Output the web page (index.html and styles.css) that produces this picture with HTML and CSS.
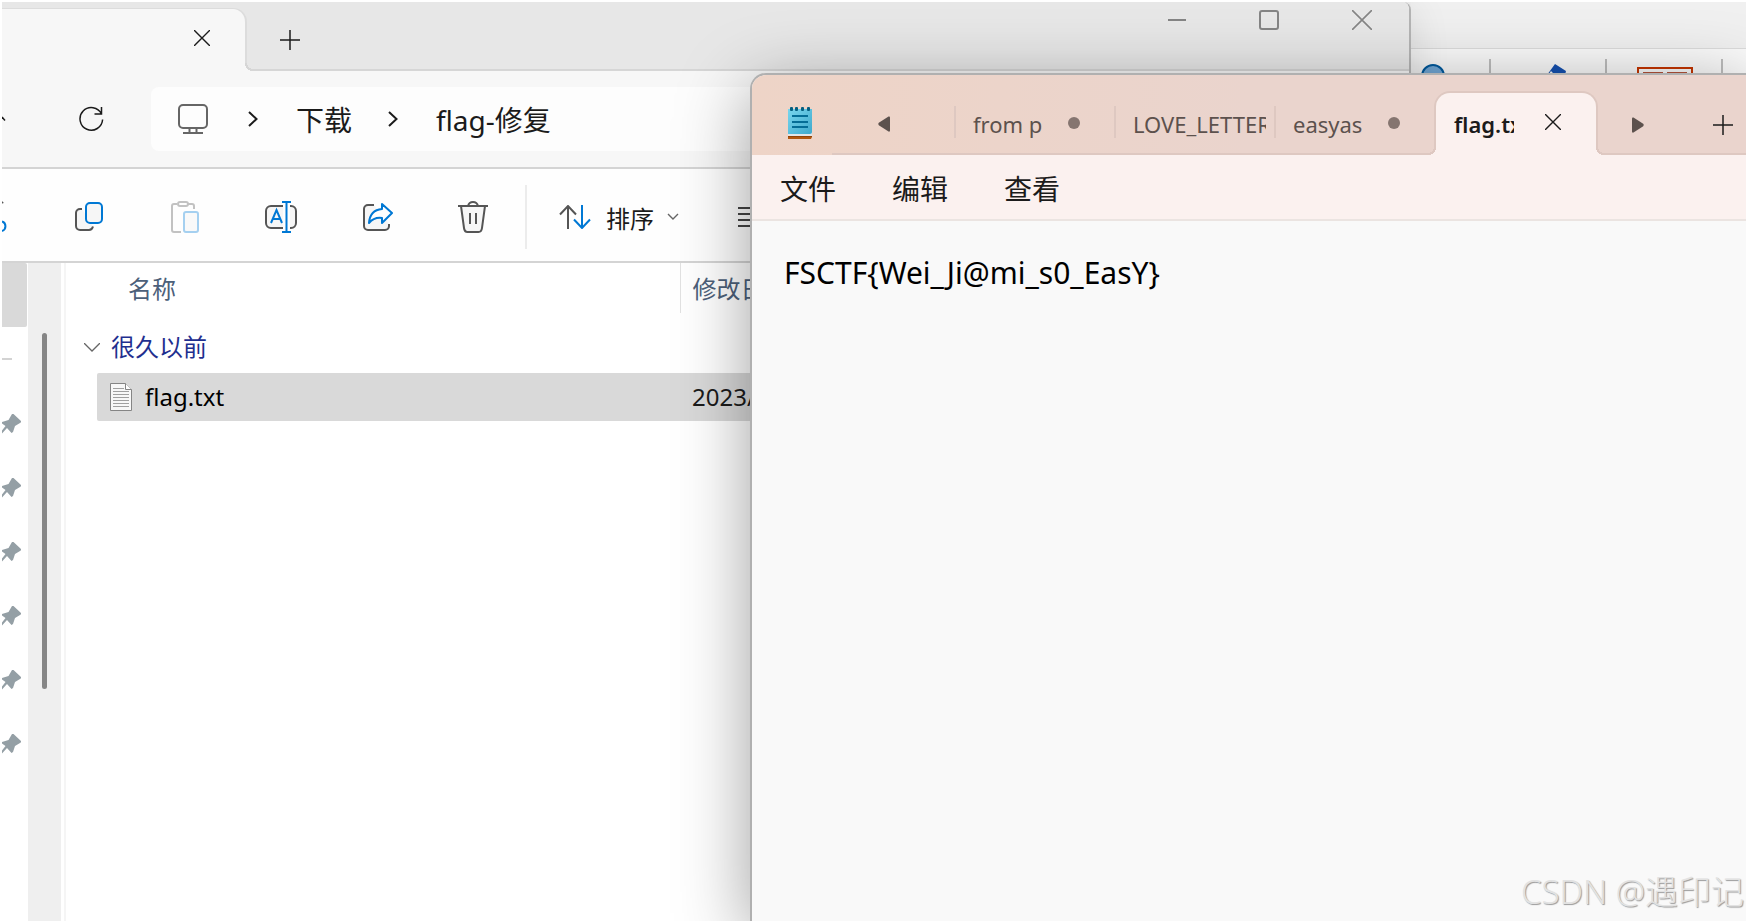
FILE: index.html
```html
<!DOCTYPE html>
<html lang="zh-CN">
<head>
<meta charset="utf-8">
<title>flag.txt</title>
<link rel="stylesheet" href="styles.css">
</head>
<body>
<main class="desktop">

  <section class="office" aria-label="ribbon">
    <div class="office-title"></div>
    <div class="office-ribbon">
      <svg class="office-icons" width="330" height="40" viewBox="0 0 330 40" fill="none">
        <circle cx="22" cy="27" r="11" fill="#73a9d8" stroke="#005a9e" stroke-width="2"/>
        <path d="M79 10v30M195 10v30M311 10v30" stroke="#bdbdbd" stroke-width="2"/>
        <path d="M136 26l8-11 11 7-2 8-8-3-5-5-4 6z" fill="#1651b0"/>
        <path d="M227 40V19h54v21" stroke="#c43501" stroke-width="2"/>
        <path d="M232 24h20M256 24h20" stroke="#b35339" stroke-width="2"/>
      </svg>
    </div>
  </section>

  <section class="explorer" aria-label="explorer">
    <header class="ex-tabs">
      <div class="ex-tab">
        <button class="plain" aria-label="close tab"><svg width="16" height="16" viewBox="0 0 16 16" fill="none" stroke="#1b1b1b" stroke-width="1.4"><path d="M0 0l16 16M16 0L0 16"/></svg></button>
      </div>
      <button class="plain ex-new" aria-label="new tab"><svg width="20" height="20" viewBox="0 0 20 20" fill="none" stroke="#1b1b1b" stroke-width="1.5"><path d="M10 0v20M0 10h20"/></svg></button>
      <div class="ex-controls">
        <button class="plain" aria-label="minimize"><svg width="20" height="20" viewBox="0 0 20 20" fill="none" stroke="#858585" stroke-width="2"><path d="M2 10h18"/></svg></button>
        <button class="plain" aria-label="maximize"><svg width="20" height="20" viewBox="0 0 20 20" fill="none" stroke="#858585" stroke-width="2"><rect x="1" y="1" width="18" height="18" rx="2"/></svg></button>
        <button class="plain" aria-label="close"><svg width="20" height="20" viewBox="0 0 20 20" fill="none" stroke="#858585" stroke-width="1.6"><path d="M0 0l20 20M20 0L0 20"/></svg></button>
      </div>
    </header>

    <nav class="ex-nav">
      <button class="plain ex-up" aria-label="up"><svg width="4" height="6" viewBox="0 0 4 6" fill="none" stroke="#1b1b1b" stroke-width="1.5"><path d="M0 1l3 3.500"/></svg></button>
      <button class="plain ex-refresh" aria-label="refresh"><svg width="26" height="26" viewBox="0 0 26 26" fill="none" stroke="#1b1b1b" stroke-width="1.500"><path d="M23.500 8A11.300 11.300 0 1 0 24.600 13.500M23.500 1v7h-7"/></svg></button>
      <div class="ex-address">
        <svg width="30" height="30" viewBox="0 0 30 30" fill="none" stroke="#666" stroke-width="2"><rect x="1" y="1" width="28" height="23" rx="4"/><path d="M11.500 24v4M18.500 24v4M5 29h20"/></svg>
        <svg class="crumb" width="10" height="16" viewBox="0 0 10 16" fill="none" stroke="#1b1b1b" stroke-width="2"><path d="M1 1l7.500 7L1 15"/></svg>
        <a class="crumb-link" href="#">下载</a>
        <svg class="crumb" width="10" height="16" viewBox="0 0 10 16" fill="none" stroke="#1b1b1b" stroke-width="2"><path d="M1 1l7.500 7L1 15"/></svg>
        <a class="crumb-link" href="#">flag-修复</a>
      </div>
    </nav>

    <div class="ex-toolbar">
      <button class="plain tool-cut" aria-label="cut"><svg width="6" height="32" viewBox="0 0 6 32" fill="none" stroke-width="2"><path d="M0 2l1-1" stroke="#555"/><path d="M0 20.500a5 5 0 0 1 0 9.500" stroke="#0078d4"/></svg></button>
      <button class="plain tool" aria-label="copy"><svg width="32" height="32" viewBox="0 0 32 32" fill="none" stroke-width="2"><path d="M9 8H7a4 4 0 0 0-4 4v13a4 4 0 0 0 4 4h9q3 0 4-3.500" fill="#f6f6f6" stroke="#555"/><rect x="13" y="2" width="16" height="20" rx="4" fill="#f6f6f6" stroke="#0078d4"/></svg></button>
      <button class="plain tool" aria-label="paste"><svg width="32" height="32" viewBox="0 0 32 32" fill="none" stroke-width="2"><path d="M8 3H5a2 2 0 0 0-2 2v24a2 2 0 0 0 2 2h7M19 3h4q2 0 2 2v3" stroke="#c2c2c2"/><rect x="9" y="1" width="10" height="4" rx="2" stroke="#c2c2c2"/><rect x="15" y="11" width="14" height="20" rx="2" fill="#f9f9f9" stroke="#a5d0f0"/></svg></button>
      <button class="plain tool" aria-label="rename"><svg width="32" height="32" viewBox="0 0 32 32" fill="none" stroke-width="2"><path d="M18 5H6a5 5 0 0 0-5 5v12a5 5 0 0 0 5 5h12M25 5h1a5 5 0 0 1 5 5v12a5 5 0 0 1-5 5h-1" fill="#f6f6f6" stroke="#555"/><path d="M6 22l5.500-13L17 22M8 18h7M17 1h9M17 31h9M21.500 1v30" stroke="#0078d4"/></svg></button>
      <button class="plain tool" aria-label="share"><svg width="32" height="32" viewBox="0 0 32 32" fill="none" stroke-width="2"><path d="M13 4H7a4 4 0 0 0-4 4v17a4 4 0 0 0 4 4h17a4 4 0 0 0 4-4v-2" fill="#f6f6f6" stroke="#555"/><path d="M21 3l10 9-10 10v-5q-8-1-13 5Q9 9 21 8z" fill="#fff" stroke="#0078d4" stroke-linejoin="round"/></svg></button>
      <button class="plain tool" aria-label="delete"><svg width="32" height="32" viewBox="0 0 32 32" fill="none" stroke="#555" stroke-width="2"><path d="M4 5l3 22q.5 4 3.500 4h11q3 0 3.500-4l3-22" fill="#f6f6f6"/><path d="M1 5h30M11 5q1-4 5-4t5 4M13 12v11M19 12v11"/></svg></button>
      <span class="tool-sep"></span>
      <button class="plain tool-sort"><svg width="32" height="24" viewBox="0 0 32 24" fill="none" stroke-width="2"><path d="M9 24V1M1 9.500L9 1l8 8.500" stroke="#555"/><path d="M23 0v23M15 14.500l8 8.500 8-8.500" stroke="#0078d4"/></svg><span>排序</span><svg width="12" height="8" viewBox="0 0 12 8" fill="none" stroke="#666" stroke-width="1.400"><path d="M1 1l5 5 5-5"/></svg></button>
      <button class="plain tool-view" aria-label="view"><svg width="24" height="20" viewBox="0 0 24 20" fill="none" stroke="#444" stroke-width="2"><path d="M0 1h24M0 7h24M0 13h24M0 19h24"/></svg></button>
    </div>

    <div class="ex-body">
      <aside class="ex-side">
        <div class="side-current"></div>
        <div class="side-line"></div>
        <ul class="pins">
          <li><svg class="pin" viewBox="0 0 20 22"><path d="M10 1l1.500 0 7.500 7q.5 1.500-1 2l-5 3-2 6-1.500 1-4.500-5-5 5.500v-3l3.500-4.500L0 10.500V9l6.500-2z"/></svg></li>
          <li><svg class="pin" viewBox="0 0 20 22"><path d="M10 1l1.500 0 7.500 7q.5 1.500-1 2l-5 3-2 6-1.500 1-4.500-5-5 5.500v-3l3.500-4.500L0 10.500V9l6.500-2z"/></svg></li>
          <li><svg class="pin" viewBox="0 0 20 22"><path d="M10 1l1.500 0 7.500 7q.5 1.500-1 2l-5 3-2 6-1.500 1-4.500-5-5 5.500v-3l3.500-4.500L0 10.500V9l6.500-2z"/></svg></li>
          <li><svg class="pin" viewBox="0 0 20 22"><path d="M10 1l1.500 0 7.500 7q.5 1.500-1 2l-5 3-2 6-1.500 1-4.500-5-5 5.500v-3l3.500-4.500L0 10.500V9l6.500-2z"/></svg></li>
          <li><svg class="pin" viewBox="0 0 20 22"><path d="M10 1l1.500 0 7.500 7q.5 1.500-1 2l-5 3-2 6-1.500 1-4.500-5-5 5.500v-3l3.500-4.500L0 10.500V9l6.500-2z"/></svg></li>
          <li><svg class="pin" viewBox="0 0 20 22"><path d="M10 1l1.500 0 7.500 7q.5 1.500-1 2l-5 3-2 6-1.500 1-4.500-5-5 5.500v-3l3.500-4.500L0 10.500V9l6.500-2z"/></svg></li>
        </ul>
      </aside>
      <div class="ex-scroll"><div class="ex-thumb"></div></div>
      <div class="ex-files">
        <table class="files">
          <colgroup><col class="col-gutter"><col class="col-name"><col></colgroup>
          <thead>
            <tr><td></td><th scope="col" class="h-name">名称</th><th scope="col" class="h-date">修改日期</th></tr>
          </thead>
          <tbody>
            <tr class="group"><th colspan="3" scope="rowgroup"><span class="group-in"><svg width="16" height="9" viewBox="0 0 16 9" fill="none" stroke="#666" stroke-width="1.300"><path d="M0 0l8 8 8-8"/></svg>很久以前</span></th></tr>
            <tr class="file"><td></td>
              <td class="f-name"><span class="file-in"><svg width="22" height="28" viewBox="0 0 22 28"><path d="M.5.5h15l6 6v21H.5z" fill="#f8f8f8" stroke="#858585"/><path d="M15.500.5v6h6" fill="#fff" stroke="#858585"/><path d="M3 5.500h11M3 8.500h16M3 11.500h16M3 14.500h16M3 17.500h16M3 20.500h16M3 23.500h16" stroke="#a0a0a0"/></svg>flag.txt</span></td>
              <td class="f-date">2023/</td></tr>
          </tbody>
        </table>
      </div>
    </div>
  </section>

  <section class="notepad" aria-label="notepad">
    <header class="np-tabs">
      <div class="np-logo">
        <svg width="24" height="32" viewBox="0 0 24 32"><defs><linearGradient id="pad" x1="0" y1="0" x2="1" y2="1"><stop offset="0" stop-color="#78d6ee"/><stop offset="1" stop-color="#3fa9cc"/></linearGradient></defs><path d="M0 27h24v3l-1 2H0z" fill="#b3570f"/><path d="M0 26h24v3H0z" fill="#e4e6e8"/><path d="M0 29h24v1H0z" fill="#934307"/><path d="M0 2h24v23q0 2-2 2H0z" fill="url(#pad)"/><path d="M4 9h16M4 15h16M4 20h16" stroke="#046d96" stroke-width="2"/><g fill="#045f80"><rect x="2" y="0" width="3" height="4" rx="1"/><rect x="7" y="0" width="3" height="4" rx="1"/><rect x="13" y="0" width="3" height="4" rx="1"/><rect x="19" y="0" width="3" height="4" rx="1"/></g></svg>
      </div>
      <div class="np-strip">
        <button class="plain np-prev" aria-label="previous tabs"><svg width="12" height="16" viewBox="0 0 12 16"><path d="M12 1.500v13q0 1.500-1.500 1L.8 9.200Q-.2 8 .8 6.800L10.500.5Q12 0 12 1.500z" fill="#5c514d"/></svg></button>
        <button class="plain np-tab"><span class="np-label short">from p</span><i class="dot"></i></button>
        <button class="plain np-tab"><span class="np-label long">LOVE_LETTER</span></button>
        <button class="plain np-tab"><span class="np-label short">easyas</span><i class="dot"></i></button>
      </div>
      <div class="np-active">
        <span class="np-label active">flag.txt</span>
        <button class="plain" aria-label="close tab"><svg width="16" height="16" viewBox="0 0 16 16" fill="none" stroke="#1b1b1b" stroke-width="1.400"><path d="M0 0l16 16M16 0L0 16"/></svg></button>
      </div>
      <div class="np-rest">
        <button class="plain" aria-label="next tabs"><svg width="12" height="16" viewBox="0 0 12 16"><path d="M0 1.500v13q0 1.500 1.500 1l9.700-6.300q1-1.200 0-2.400L1.500.5Q0 0 0 1.500z" fill="#5c514d"/></svg></button>
        <button class="plain" aria-label="new tab"><svg width="20" height="20" viewBox="0 0 20 20" fill="none" stroke="#1b1b1b" stroke-width="1.500"><path d="M10 0v20M0 10h20"/></svg></button>
      </div>
    </header>
    <nav class="np-menu">
      <button class="plain">文件</button>
      <button class="plain">编辑</button>
      <button class="plain">查看</button>
    </nav>
    <textarea class="np-text" aria-label="text" spellcheck="false">FSCTF{Wei_Ji@mi_s0_EasY}</textarea>
  </section>

  <div class="watermark">CSDN @遇印记</div>
</main>
</body>
</html>
```

FILE: styles.css
```css
* { box-sizing: border-box; }

body {
  margin: 0;
  padding: 2px;
  height: 100vh;
  background: #fff;
  color: #1b1b1b;
  font-family: "Noto Sans", "Noto Sans CJK SC", sans-serif;
}

svg { display: block; flex: none; }

.plain {
  display: flex;
  align-items: center;
  justify-content: center;
  padding: 0;
  border: 0;
  background: none;
  color: inherit;
  font: inherit;
}

.desktop {
  position: relative;
  height: 100%;
  overflow: hidden;
  background: #eee;
}

/* Window at the back */
.office { height: 100%; display: flex; flex-direction: column; padding-left: 1409px; }
.office-title { height: 47px; background: #f0f0f0; border-bottom: 1px solid #dcdcdc; }
.office-ribbon { flex: 1; background: #fafafa; }

/* File explorer */
.explorer {
  position: absolute;
  inset: 0 335px 0 0;
  display: flex;
  flex-direction: column;
  border-right: 2px solid #b4b4b4;
  border-top-right-radius: 8px;
  background: #fff;
  box-shadow: 0 8px 40px rgba(0, 0, 0, 0.12);
  overflow: hidden;
}

.ex-tabs {
  display: flex;
  height: 69px;
  background: linear-gradient(#d6d6d6, #d6d6d6) bottom / 100% 2px no-repeat #e7e7e7;
}
.ex-tab {
  position: relative;
  display: flex;
  align-items: center;
  justify-content: flex-end;
  width: 245px;
  margin-top: 6px;
  padding: 0 35px 4px 0;
  border: solid #dcdcdc;
  border-width: 1px 2px 0 0;
  border-top-right-radius: 14px;
  background: #f7f7f7;
}
.ex-tab::after {
  content: "";
  position: absolute;
  left: 100%;
  bottom: 0;
  width: 8px;
  height: 8px;
  background: radial-gradient(circle at 100% 0, #e7e7e7 6px, #d6d6d6 6px 8px, #f7f7f7 8px);
}
.ex-new { width: 86px; padding-top: 7px; }
.ex-controls { display: flex; align-items: flex-start; gap: 73px; margin-left: auto; padding: 8px 37px 0 0; }

.ex-nav {
  display: flex;
  align-items: center;
  height: 98px;
  border-bottom: 2px solid #d4d4d4;
  background: #f7f7f7;
}
.ex-up { width: 4px; }
.ex-refresh { width: 26px; margin: 0 47px 0 72px; }
.ex-address {
  flex: 1;
  display: flex;
  align-items: center;
  height: 64px;
  padding-left: 27px;
  border-radius: 8px;
  background: #fdfdfd;
  font-size: 28px;
}
.crumb { margin-left: 40px; }
.crumb-link { margin-left: 38px; color: inherit; text-decoration: none; }
.crumb-link + .crumb { margin-left: 36px; }

.ex-toolbar {
  display: flex;
  align-items: center;
  height: 94px;
  padding-top: 4px;
  border-bottom: 2px solid #d4d4d4;
  background: #fefefe;
}
.tool-cut { width: 39px; justify-content: flex-start; }
.tool { width: 96px; height: 64px; }
.tool-sep { width: 2px; height: 64px; margin-left: 4px; background: #ececec; }
.tool-sort { margin-left: 32px; font-size: 24px; }
.tool-sort span { margin: 0 13px 0 15px; }
.tool-view { margin-left: 59px; }

.ex-body { flex: 1; display: flex; min-height: 0; }
.ex-side { width: 26px; }
.side-current { height: 64px; margin-right: 1px; border-radius: 0 2px 2px 0; background: #d9d9d9; }
.side-line { width: 10px; height: 2px; margin-top: 31px; background: #d3d3d3; }
.pins { margin: 32px 0 0; padding: 0; list-style: none; }
.pins li { display: flex; align-items: center; height: 64px; }
.pin { width: 20px; height: 22px; fill: #949fa5; }
.ex-scroll { width: 33px; padding: 70px 14px 0; background: #efefef; }
.ex-thumb { height: 356px; border-radius: 3px; background: #868686; }
.ex-files { flex: 1; margin-left: 3px; border-left: 2px solid #f5f5f5; padding-left: 18px; }

.files { width: 100%; table-layout: fixed; border-collapse: collapse; font-size: 24px; line-height: 32px; }
.files th, .files td { padding: 0; text-align: left; font-weight: 400; }
.col-gutter { width: 13px; }
.col-name { width: 583px; }
.files thead th { height: 50px; color: #4c607a; }
.files .h-name { padding: 2px 0 0 31px; border-right: 1px solid #e2e2e2; }
.files .h-date { padding: 2px 0 0 12px; }
.files .group th { height: 60px; padding-top: 8px; color: #1f2f8f; }
.group-in { display: flex; align-items: center; gap: 11px; }
.file td { height: 48px; }
.file .f-name { padding-left: 13px; border-radius: 2px 0 0 2px; background: #d9d9d9; color: #000; }
.file .f-date { padding-left: 12px; background: #d9d9d9; }
.file-in { display: flex; align-items: center; gap: 13px; }

/* Notepad */
.notepad {
  position: absolute;
  inset: 71px 0 0 748px;
  display: flex;
  flex-direction: column;
  border: solid #b0b0b0;
  border-width: 2px 0 0 2px;
  border-top-left-radius: 16px;
  background: #f9f9f9;
  box-shadow: 0 16px 72px rgba(0, 0, 0, 0.38);
}
.np-tabs {
  display: flex;
  height: 80px;
  border-top-left-radius: 14px;
  background: linear-gradient(90deg, #eed4c7, #ead4cd 50%, #ead4cd);
}
.np-logo { width: 80px; padding: 32px 0 0 36px; }
.np-strip { display: flex; align-items: center; width: 602px; padding-top: 16px; border-bottom: 2px solid #dec8c1; }
.np-prev { width: 122px; padding: 4px 0 0 46px; justify-content: flex-start; }
.np-prev, .np-tab { flex: none; height: 32px; }
.np-tab {
  width: 160px;
  justify-content: flex-start;
  padding: 4px 0 0 17px;
  border-left: 2px solid #dec8c1;
  color: #5c514d;
  font-size: 22px;
}
.np-label { flex: none; overflow: hidden; text-align: left; line-height: 32px; white-space: nowrap; }
.short { width: 70px; }
.long { width: 133px; }
.dot { width: 12px; height: 12px; margin: 0 0 2px 25px; border-radius: 50%; background: #857570; }
.np-active {
  position: relative;
  display: flex;
  align-items: center;
  flex: none;
  width: 164px;
  margin-top: 16px;
  padding-left: 18px;
  border: 2px solid #dec8c1;
  border-bottom: 0;
  border-radius: 16px 16px 0 0;
  background: #fbf1ef;
}
.np-active::before, .np-active::after {
  content: "";
  position: absolute;
  bottom: 0;
  width: 8px;
  height: 8px;
}
.np-active::before { right: 100%; background: radial-gradient(circle at 0 0, #ead4cd 6px, #dec8c1 6px 8px, #fbf1ef 8px); }
.np-active::after { left: 100%; background: radial-gradient(circle at 100% 0, #ead4cd 6px, #dec8c1 6px 8px, #fbf1ef 8px); }
.active { width: 60px; margin-right: 31px; font-size: 22px; font-weight: 600; }
.np-active .plain { padding-bottom: 4px; }
.np-rest {
  flex: 1;
  display: flex;
  align-items: center;
  justify-content: space-between;
  padding: 21px 13px 0 34px;
  border-bottom: 2px solid #dec8c1;
}
.np-menu {
  display: flex;
  gap: 56px;
  height: 66px;
  padding: 2px 0 0 28px;
  border-bottom: 2px solid #ebe4e1;
  background: #fbf1ef;
  font-size: 28px;
}
.np-text {
  flex: 1;
  padding: 31px 32px;
  border: 0;
  outline: 0;
  resize: none;
  background: #f9f9f9;
  color: #000;
  font: 30px/42px "Noto Sans", "Noto Sans CJK SC", sans-serif;
}

.watermark {
  position: absolute;
  right: 2px;
  bottom: 7px;
  color: #e2e2e2;
  font-size: 33px;
  font-weight: 300;
  line-height: 44px;
  text-shadow: 1px 1px 1px #999;
}
```
